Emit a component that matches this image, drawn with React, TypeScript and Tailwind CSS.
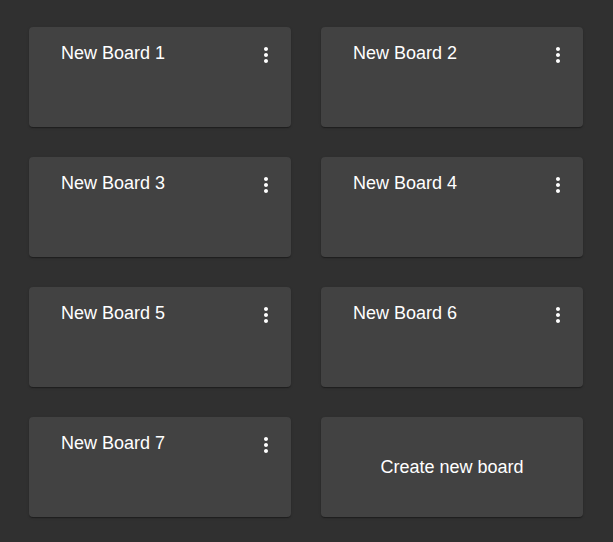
import React from "react";

function MoreVert() {
  return (
    <svg width="24" height="24" viewBox="0 0 24 24" fill="#ffffff" aria-hidden="true">
      <path d="M12 8c1.1 0 2-.9 2-2s-.9-2-2-2-2 .9-2 2 .9 2 2 2zm0 2c-1.1 0-2 .9-2 2s.9 2 2 2 2-.9 2-2-.9-2-2-2zm0 6c-1.1 0-2 .9-2 2s.9 2 2 2 2-.9 2-2-.9-2-2-2z" />
    </svg>
  );
}

const boards = ["New Board 1", "New Board 2", "New Board 3", "New Board 4", "New Board 5", "New Board 6", "New Board 7"];

export default function App() {
  return (
    <div
      className="min-h-[542px] w-full bg-[#303030] text-white"
      style={{ fontFamily: '"Liberation Sans", Arial, sans-serif' }}
    >
      <div className="grid grid-cols-[262px_262px] auto-rows-[100px] gap-[30px] pl-[29px] pt-[27px] pb-[25px]">
        {boards.map((b) => (
          <div
            key={b}
            className="flex items-start justify-between rounded-[4px] bg-[#424242] pl-[32px] pr-[13px] shadow-[0_2px_1px_-1px_rgba(0,0,0,0.2),0_1px_1px_0_rgba(0,0,0,0.14),0_1px_3px_0_rgba(0,0,0,0.12)]"
          >
            <div className="mt-[14px] text-[18px] leading-[24px]">{b}</div>
            <div className="mt-[16px] flex h-[24px] w-[24px] items-center justify-center">
              <MoreVert />
            </div>
          </div>
        ))}
        <div className="flex items-center justify-center rounded-[4px] bg-[#424242] shadow-[0_2px_1px_-1px_rgba(0,0,0,0.2),0_1px_1px_0_rgba(0,0,0,0.14),0_1px_3px_0_rgba(0,0,0,0.12)]">
          <div className="text-[18px] leading-[24px]">Create new board</div>
        </div>
      </div>
    </div>
  );
}
